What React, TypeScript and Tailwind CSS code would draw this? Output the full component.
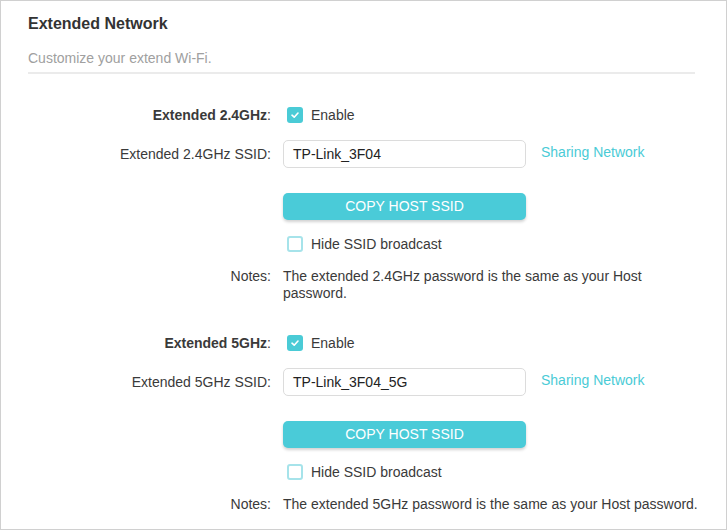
import React from "react";

const Checked = () => (
  <span className="flex h-[16px] w-[16px] items-center justify-center rounded-[3px] bg-[#4acbd6]">
    <svg width="10" height="10" viewBox="0 0 10 10" fill="none">
      <path d="M2 5.2 L4.2 7.2 L8 3" stroke="white" strokeWidth="1.6" strokeLinecap="round" strokeLinejoin="round" />
    </svg>
  </span>
);

const Unchecked = () => (
  <span className="block h-[16px] w-[16px] rounded-[3px] border-2 border-[#a6e3ea] bg-white" />
);

function Section({ band, ssid, note }: { band: string; ssid: string; note: string }) {
  return (
    <div className="mt-[31px] flex flex-col">
      <div className="flex h-[20px] items-center">
        <div className="w-[243px] shrink-0 text-right">
          <span className="font-bold">Extended {band}</span>:
        </div>
        <div className="ml-[16px] flex items-center gap-[8px]">
          <Checked />
          <span>Enable</span>
        </div>
      </div>
      <div className="mt-[15px] flex h-[28px] items-center">
        <div className="w-[243px] shrink-0 text-right">Extended {band} SSID:</div>
        <div className="ml-[12px] flex h-[28px] w-[243px] shrink-0 items-center rounded-[5px] border border-[#dcdcdc] pl-[9px] text-[#222]">
          {ssid}
        </div>
        <span className="ml-[15px] -mt-[4px] text-[#4acbd6]">Sharing Network</span>
      </div>
      <div className="mt-[25px] flex">
        <div className="ml-[255px] flex h-[27px] w-[243px] items-center justify-center rounded-[5px] bg-[#4acbd8] text-white shadow-[0_2px_3px_rgba(0,0,0,0.18)]">
          COPY HOST SSID
        </div>
      </div>
      <div className="mt-[14px] flex h-[20px] items-center">
        <div className="ml-[259px] flex items-center gap-[8px]">
          <Unchecked />
          <span>Hide SSID broadcast</span>
        </div>
      </div>
      <div className="mt-[14px] flex leading-[17px]">
        <div className="w-[243px] shrink-0 text-right">Notes:</div>
        <div className="ml-[12px] w-[426px] shrink-0">{note}</div>
      </div>
    </div>
  );
}

export default function App() {
  return (
    <div
      className="h-[530px] w-[727px] overflow-hidden border border-[#d0d0d0] bg-white pl-[27px] pr-[31px] text-[14px] text-[#3a3a3a]"
      style={{ fontFamily: '"Liberation Sans", Arial, sans-serif' }}
    >
      <div className="mt-[13px] text-[16px] font-bold leading-[20px] text-[#333]">Extended Network</div>
      <div className="mt-[14px] leading-[20px] text-[#a0a0a0]">Customize your extend Wi-Fi.</div>
      <div className="mt-[4px] h-[2px] bg-[#ebebeb]" />
      <Section
        band="2.4GHz"
        ssid="TP-Link_3F04"
        note="The extended 2.4GHz password is the same as your Host password."
      />
      <Section
        band="5GHz"
        ssid="TP-Link_3F04_5G"
        note="The extended 5GHz password is the same as your Host password."
      />
    </div>
  );
}
